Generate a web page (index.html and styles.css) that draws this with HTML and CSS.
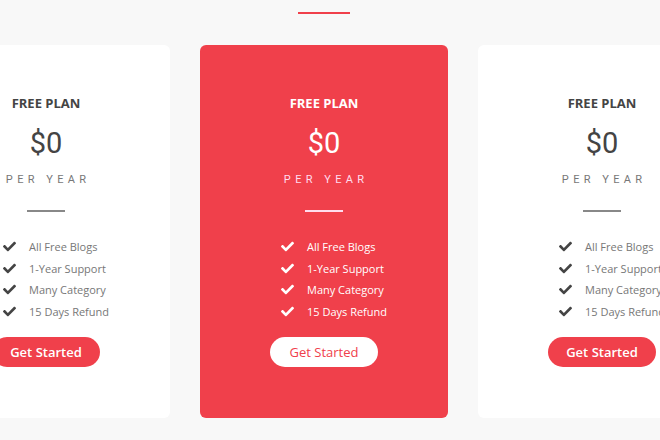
FILE: index.html
```html
<!DOCTYPE html>
<html>
<head>
  <title>Pricing</title>
  <meta name="viewport" content="width=device-width, initial-scale=1">
  <link rel="stylesheet" href="styles.css">
</head>
<body>
  <section class="pricing">
    <div class="title-line"></div>

    <div class="plans">
      <div class="plan">
        <h3>FREE PLAN</h3>
        <div class="price">$0</div>
        <div class="period">PER YEAR</div>
        <div class="divider"></div>
        <ul class="features">
          <li><svg viewBox="0 0 512 512"><path d="M173.9 439.4l-166.4-166.4c-10-10-10-26.2 0-36.2l36.2-36.2c10-10 26.2-10 36.2 0L192 312.7 432.1 72.6c10-10 26.2-10 36.2 0l36.2 36.2c10 10 10 26.2 0 36.2l-294.4 294.4c-10 10-26.2 10-36.2 0z"/></svg>All Free Blogs</li>
          <li><svg viewBox="0 0 512 512"><path d="M173.9 439.4l-166.4-166.4c-10-10-10-26.2 0-36.2l36.2-36.2c10-10 26.2-10 36.2 0L192 312.7 432.1 72.6c10-10 26.2-10 36.2 0l36.2 36.2c10 10 10 26.2 0 36.2l-294.4 294.4c-10 10-26.2 10-36.2 0z"/></svg>1-Year Support</li>
          <li><svg viewBox="0 0 512 512"><path d="M173.9 439.4l-166.4-166.4c-10-10-10-26.2 0-36.2l36.2-36.2c10-10 26.2-10 36.2 0L192 312.7 432.1 72.6c10-10 26.2-10 36.2 0l36.2 36.2c10 10 10 26.2 0 36.2l-294.4 294.4c-10 10-26.2 10-36.2 0z"/></svg>Many Category</li>
          <li><svg viewBox="0 0 512 512"><path d="M173.9 439.4l-166.4-166.4c-10-10-10-26.2 0-36.2l36.2-36.2c10-10 26.2-10 36.2 0L192 312.7 432.1 72.6c10-10 26.2-10 36.2 0l36.2 36.2c10 10 10 26.2 0 36.2l-294.4 294.4c-10 10-26.2 10-36.2 0z"/></svg>15 Days Refund</li>
        </ul>
        <button>Get Started</button>
      </div>

      <div class="plan active">
        <h3>FREE PLAN</h3>
        <div class="price">$0</div>
        <div class="period">PER YEAR</div>
        <div class="divider"></div>
        <ul class="features">
          <li><svg viewBox="0 0 512 512"><path d="M173.9 439.4l-166.4-166.4c-10-10-10-26.2 0-36.2l36.2-36.2c10-10 26.2-10 36.2 0L192 312.7 432.1 72.6c10-10 26.2-10 36.2 0l36.2 36.2c10 10 10 26.2 0 36.2l-294.4 294.4c-10 10-26.2 10-36.2 0z"/></svg>All Free Blogs</li>
          <li><svg viewBox="0 0 512 512"><path d="M173.9 439.4l-166.4-166.4c-10-10-10-26.2 0-36.2l36.2-36.2c10-10 26.2-10 36.2 0L192 312.7 432.1 72.6c10-10 26.2-10 36.2 0l36.2 36.2c10 10 10 26.2 0 36.2l-294.4 294.4c-10 10-26.2 10-36.2 0z"/></svg>1-Year Support</li>
          <li><svg viewBox="0 0 512 512"><path d="M173.9 439.4l-166.4-166.4c-10-10-10-26.2 0-36.2l36.2-36.2c10-10 26.2-10 36.2 0L192 312.7 432.1 72.6c10-10 26.2-10 36.2 0l36.2 36.2c10 10 10 26.2 0 36.2l-294.4 294.4c-10 10-26.2 10-36.2 0z"/></svg>Many Category</li>
          <li><svg viewBox="0 0 512 512"><path d="M173.9 439.4l-166.4-166.4c-10-10-10-26.2 0-36.2l36.2-36.2c10-10 26.2-10 36.2 0L192 312.7 432.1 72.6c10-10 26.2-10 36.2 0l36.2 36.2c10 10 10 26.2 0 36.2l-294.4 294.4c-10 10-26.2 10-36.2 0z"/></svg>15 Days Refund</li>
        </ul>
        <button>Get Started</button>
      </div>

      <div class="plan">
        <h3>FREE PLAN</h3>
        <div class="price">$0</div>
        <div class="period">PER YEAR</div>
        <div class="divider"></div>
        <ul class="features">
          <li><svg viewBox="0 0 512 512"><path d="M173.9 439.4l-166.4-166.4c-10-10-10-26.2 0-36.2l36.2-36.2c10-10 26.2-10 36.2 0L192 312.7 432.1 72.6c10-10 26.2-10 36.2 0l36.2 36.2c10 10 10 26.2 0 36.2l-294.4 294.4c-10 10-26.2 10-36.2 0z"/></svg>All Free Blogs</li>
          <li><svg viewBox="0 0 512 512"><path d="M173.9 439.4l-166.4-166.4c-10-10-10-26.2 0-36.2l36.2-36.2c10-10 26.2-10 36.2 0L192 312.7 432.1 72.6c10-10 26.2-10 36.2 0l36.2 36.2c10 10 10 26.2 0 36.2l-294.4 294.4c-10 10-26.2 10-36.2 0z"/></svg>1-Year Support</li>
          <li><svg viewBox="0 0 512 512"><path d="M173.9 439.4l-166.4-166.4c-10-10-10-26.2 0-36.2l36.2-36.2c10-10 26.2-10 36.2 0L192 312.7 432.1 72.6c10-10 26.2-10 36.2 0l36.2 36.2c10 10 10 26.2 0 36.2l-294.4 294.4c-10 10-26.2 10-36.2 0z"/></svg>Many Category</li>
          <li><svg viewBox="0 0 512 512"><path d="M173.9 439.4l-166.4-166.4c-10-10-10-26.2 0-36.2l36.2-36.2c10-10 26.2-10 36.2 0L192 312.7 432.1 72.6c10-10 26.2-10 36.2 0l36.2 36.2c10 10 10 26.2 0 36.2l-294.4 294.4c-10 10-26.2 10-36.2 0z"/></svg>15 Days Refund</li>
        </ul>
        <button>Get Started</button>
      </div>
    </div>
  </section>
</body>
</html>
```

FILE: styles.css
```css
*, *::before, *::after {
  box-sizing: border-box;
  margin: 0;
  padding: 0;
}

html, body {
  height: 100%;
}

body {
  font-family: "Open Sans", sans-serif;
  background-color: #f8f8f8;
  color: #444;
  overflow: hidden;
}

.pricing {
  padding-top: 12px;
  padding-right: 12px;
}

.title-line {
  width: 52px;
  height: 2px;
  margin: 0 auto;
  background: #f0404b;
}

.plans {
  display: flex;
  justify-content: center;
  gap: 30px;
  margin-top: 31px;
}

.plan {
  flex: 0 0 248px;
  height: 373px;
  padding-top: 50px;
  background: #fff;
  border-radius: 6px;
  text-align: center;
}

.plan h3 {
  font-size: 13px;
  line-height: 16px;
  font-weight: 700;
  color: #444;
}

.price {
  margin-top: 15px;
  font-family: Roboto, sans-serif;
  font-size: 29px;
  line-height: 34px;
  color: #444;
}

.period {
  margin-top: 13px;
  font-family: Roboto, sans-serif;
  font-size: 11px;
  line-height: 14px;
  letter-spacing: 4.4px;
  padding-left: 4.4px;
  color: #777;
}

.divider {
  width: 38px;
  height: 2px;
  margin: 23px auto 0;
  background: #888;
}

.features {
  list-style: none;
  display: inline-block;
  margin-top: 24px;
  margin-left: 20px;
  text-align: left;
}

.features li {
  display: flex;
  align-items: center;
  height: 21.6px;
  font-size: 11px;
  color: #777;
}

.features svg {
  width: 13px;
  height: 13px;
  margin-right: 13px;
  fill: #444;
}

button {
  display: block;
  width: 108px;
  height: 30px;
  margin: 14px auto 0;
  border: none;
  border-radius: 15px;
  background: #f0404b;
  color: #fff;
  font-family: "Open Sans", sans-serif;
  font-size: 13px;
  font-weight: 600;
  cursor: pointer;
}

.plan.active {
  background: #f0404b;
}

.plan.active h3,
.plan.active .price,
.plan.active .features li {
  color: #fff;
}

.plan.active .period {
  color: #fde;
}

.plan.active .divider {
  background: #fde;
}

.plan.active .features svg {
  fill: #fff;
}

.plan.active button {
  background: #fff;
  color: #f0404b;
  font-weight: 400;
}
```
